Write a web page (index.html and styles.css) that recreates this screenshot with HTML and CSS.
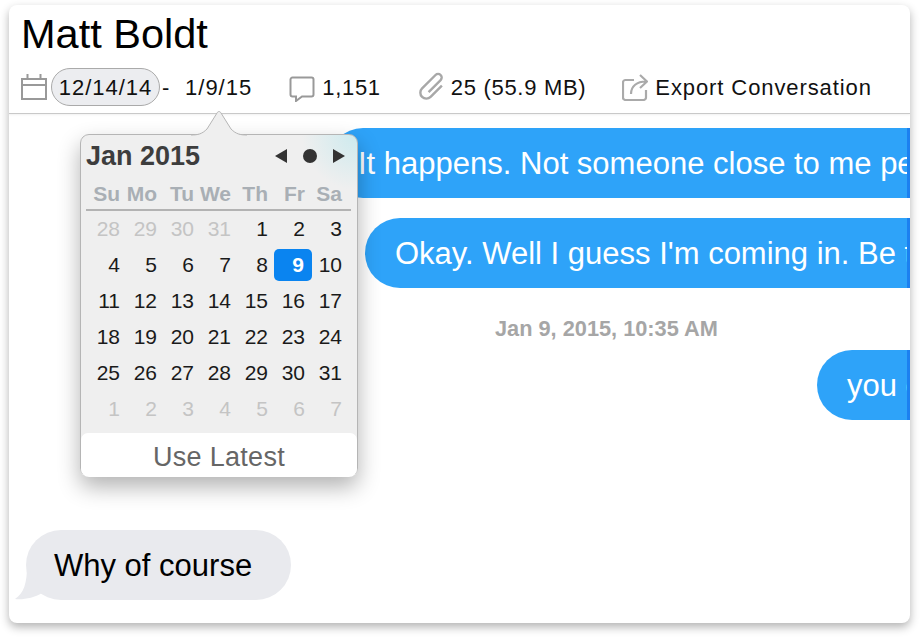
FILE: index.html
```html
<!DOCTYPE html>
<html lang="en">
<head>
    <meta charset="UTF-8">
    <meta name="viewport" content="width=device-width, initial-scale=1.0">
    <link rel="stylesheet" href="styles.css">
    <title>Matt Boldt</title>
</head>
<body>

    <div class="window">
        <div class="header">
            <div class="name">Matt Boldt</div>
            <div class="meta">
                <svg class="icon" width="26" height="26" viewBox="0 0 26 26"><path d="M1 5h24v20H1zM1 11h24M6.500 0v6M19.500 0v6" fill="none" stroke="#999" stroke-width="2"/></svg>
                <span class="date-pill">12/14/14</span>
                <span class="dash">-</span>
                <span class="date-end">1/9/15</span>
                <svg class="icon comment-icon" width="26" height="26" viewBox="0 0 26 26"><path d="M3.500 1.500h19a2 2 0 0 1 2 2v15a2 2 0 0 1-2 2H13l-6 4.500v-4.500H3.500a2 2 0 0 1-2-2v-15a2 2 0 0 1 2-2z" fill="none" stroke="#999" stroke-width="2"/></svg>
                <span class="count">1,151</span>
                <svg class="icon clip-icon" width="28" height="30" viewBox="0 0 28 30"><g transform="rotate(45 14 15)"><path d="M20 7v16a6 6 0 0 1-12 0V4a3.600 3.600 0 0 1 7.200 0v17" fill="none" stroke="#a8a8a8" stroke-width="2.400"/></g></svg>
                <span class="count">25 (55.9 MB)</span>
                <svg class="icon export-icon" width="26" height="27" viewBox="0 0 26 27"><path d="M12 6H3.500a2.500 2.500 0 0 0-2.500 2.500v15A2.500 2.500 0 0 0 3.500 26h18a2.500 2.500 0 0 0 2.500-2.500V16" fill="none" stroke="#aaa" stroke-width="2.200"/><path d="M9 20c0-8 6-12.500 15-12.500M18 1l7 6.500-7 6.500" fill="none" stroke="#aaa" stroke-width="2.200"/></svg>
                <span class="export-label">Export Conversation</span>
            </div>
        </div>

        <div class="messages">
            <div class="bubble sent first">It happens. Not someone close to me personally but still</div>
            <div class="bubble sent second">Okay. Well I guess I'm coming in. Be there soon okay</div>
            <div class="stamp">Jan 9, 2015, 10:35 AM</div>
            <div class="bubble sent third">you ok</div>
            <div class="bubble received">
                Why of course
                <svg class="tail" width="30" height="34" viewBox="0 0 30 34"><path d="M12 0C12 17 9 27 0 33c8 1 19-1 27-6z" fill="#e9eaee"/></svg>
            </div>
        </div>

        <!-- Calendar popover -->
        <div class="popover">
            <svg class="arrow" width="56" height="26" viewBox="0 0 56 26"><path d="M0 25c7 0 11-1 16-6L26 3c1-2 3-2 4 0l10 16c5 5 9 6 16 6" fill="#efefef" stroke="#b5b5b5"/></svg>
            <div class="cal-head">
                <span class="cal-title">Jan 2015</span>
                <div class="cal-nav">
                    <svg width="12" height="14" viewBox="0 0 12 14"><path d="M12 0v14L0 7z" fill="#333"/></svg>
                    <svg width="14" height="14" viewBox="0 0 14 14"><circle cx="7" cy="7" r="7" fill="#333"/></svg>
                    <svg width="12" height="14" viewBox="0 0 12 14"><path d="M0 0v14l12-7z" fill="#333"/></svg>
                </div>
            </div>
            <div class="cal-weekdays">
                <span>Su</span><span>Mo</span><span>Tu</span><span>We</span><span>Th</span><span>Fr</span><span>Sa</span>
            </div>
            <div class="cal-days">
                <span class="off">28</span><span class="off">29</span><span class="off">30</span><span class="off">31</span><span>1</span><span>2</span><span>3</span>
                <span>4</span><span>5</span><span>6</span><span>7</span><span>8</span><span class="selected">9</span><span>10</span>
                <span>11</span><span>12</span><span>13</span><span>14</span><span>15</span><span>16</span><span>17</span>
                <span>18</span><span>19</span><span>20</span><span>21</span><span>22</span><span>23</span><span>24</span>
                <span>25</span><span>26</span><span>27</span><span>28</span><span>29</span><span>30</span><span>31</span>
                <span class="off">1</span><span class="off">2</span><span class="off">3</span><span class="off">4</span><span class="off">5</span><span class="off">6</span><span class="off">7</span>
            </div>
            <div class="use-latest">Use Latest</div>
        </div>
    </div>

</body>
</html>
```

FILE: styles.css
```css
body {
    margin: 0;
    padding: 5px 0 15px 9px;
    background-color: #fff;
    font-family: "Liberation Sans", Arial, sans-serif;
}

.window {
    position: relative;
    width: 901px;
    height: 618px;
    background-color: #fff;
    border-radius: 8px;
    box-shadow: 0 4px 10px rgba(0, 0, 0, 0.3);
    overflow: hidden;
}

.header {
    height: 109px;
    box-sizing: border-box;
    padding: 6px 0 0 12px;
    border-bottom: 1px solid #c9c9c9;
    box-shadow: 0 1px 2px rgba(0, 0, 0, 0.06);
}

.name {
    font-size: 41.500px;
    line-height: 46px;
    color: #000;
}

.meta {
    display: flex;
    align-items: center;
    height: 38px;
    margin-top: 11px;
    font-size: 22px;
    letter-spacing: 0.700px;
    color: #111;
}

.meta span {
    margin-top: 2px;
}

.icon {
    flex-shrink: 0;
}

.date-pill {
    box-sizing: border-box;
    width: 109px;
    height: 38px;
    margin-left: 4px;
    border: 1px solid #aaa;
    border-radius: 19px;
    background-color: #ecedf0;
    line-height: 37px;
    letter-spacing: 1px;
    text-align: center;
}

.meta .date-pill {
    margin-top: 0;
}

.dash {
    margin-left: 2px;
}

.date-end {
    margin-left: 15px;
    letter-spacing: 1px;
}

.comment-icon {
    margin: 4px 7px 0 37px;
}

.clip-icon {
    margin: 0 5px 0 37px;
}

.export-icon {
    margin: 0 7px 0 36px;
}

.export-label {
    letter-spacing: 0.900px;
}

.messages {
    display: flex;
    flex-direction: column;
    padding-top: 14px;
}

.bubble {
    box-sizing: border-box;
    height: 70px;
    font-size: 31px;
    line-height: 72px;
    white-space: nowrap;
}

.sent {
    overflow: hidden;
    border-right: 3px solid #1c80f0;
    border-radius: 35px 0 0 35px;
    background-color: #2ea3f9;
    color: #fff;
}

.first {
    margin-left: 319px;
    padding-left: 30px;
}

.second {
    margin-top: 20px;
    margin-left: 356px;
    padding-left: 30px;
}

.third {
    margin-top: 9px;
    margin-left: 808px;
    padding-left: 30px;
}

.stamp {
    margin-top: 29px;
    margin-left: 486px;
    font-size: 21.750px;
    line-height: 24px;
    font-weight: bold;
    color: #a6a6a6;
}

.received {
    position: relative;
    align-self: flex-start;
    margin-top: 110px;
    margin-left: 17px;
    padding: 0 39px 0 28px;
    border-radius: 35px;
    background-color: #e9eaee;
    color: #000;
}

.tail {
    position: absolute;
    left: -11px;
    bottom: 0;
}

.popover {
    position: absolute;
    left: 71px;
    top: 129px;
    width: 278px;
    height: 343px;
    box-sizing: border-box;
    border: 1px solid #b5b5b5;
    border-radius: 9px;
    background: radial-gradient(circle at 100% 0, #cdeaee 0, #efefef 55px);
    box-shadow: 0 10px 22px rgba(0, 0, 0, 0.3);
}

.arrow {
    position: absolute;
    left: 110px;
    top: -25px;
}

.cal-head {
    display: flex;
    align-items: center;
    justify-content: space-between;
    height: 36px;
    margin-top: 3px;
    padding: 0 12px 0 5px;
}

.cal-title {
    font-size: 27px;
    font-weight: bold;
    color: #3d3d3d;
}

.cal-nav {
    display: flex;
    align-items: center;
    gap: 16px;
}

.cal-weekdays {
    display: grid;
    grid-template-columns: 34px repeat(6, 37px);
    height: 31px;
    margin: 4px 6px 0 5px;
    border-bottom: 2px solid #b3b3b3;
    font-size: 21px;
    font-weight: bold;
    line-height: 32px;
    text-align: right;
    color: #a9afb5;
}

.cal-days {
    display: grid;
    grid-template-columns: repeat(7, 37px);
    grid-auto-rows: 36px;
    padding-left: 3px;
    font-size: 21px;
    line-height: 36px;
    text-align: right;
    color: #1a1a1a;
}

.cal-days span {
    padding-right: 1px;
}

.cal-days .off {
    color: #c4c4c4;
}

.cal-days .selected {
    height: 32px;
    margin: 2px -6px 0 5px;
    padding-right: 8px;
    border-radius: 5px;
    background-color: #0a84f0;
    color: #fff;
    font-weight: bold;
    line-height: 32px;
}

.use-latest {
    height: 44px;
    margin-top: 6px;
    border-radius: 7px 7px 8px 8px;
    background-color: #fff;
    font-size: 27px;
    line-height: 48px;
    text-align: center;
    letter-spacing: 0.300px;
    color: #666;
}
```
